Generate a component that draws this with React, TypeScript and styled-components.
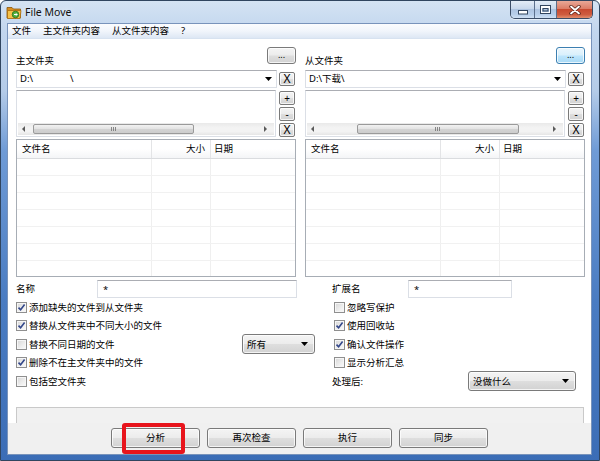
import React from "react";
import styled, { createGlobalStyle, css } from "styled-components";

const FONT = `"Noto Sans", "Noto Sans CJK SC", sans-serif`;

const Global = createGlobalStyle`
  html, body { margin: 0; padding: 0; background: #ffffff; }
  body { font-family: ${FONT}; font-size: 9.5px; color: #000; }
  * { box-sizing: border-box; }
`;

/* ---------- window chrome ---------- */

const Window = styled.div`
  position: relative;
  width: 600px;
  height: 461px;
  display: flex;
  flex-direction: column;
  border: 1px solid #30455f;
  border-radius: 6px 6px 0 0;
  overflow: hidden;
  background: linear-gradient(
    180deg,
    #d4e3f3 0px,
    #c2d6ee 30px,
    #b4cbe8 90px,
    #6f9bd6 150px,
    #4a7cc2 300px,
    #3b6db6 461px
  );
`;

const TitleBar = styled.div`
  height: 22px;
  flex: none;
  display: flex;
  align-items: center;
  padding-left: 5px;
  gap: 3px;
`;

const Title = styled.span`
  font-family: "Noto Sans", sans-serif;
  font-size: 10.5px;
  color: #111;
  text-shadow: 0 0 6px rgba(255, 255, 255, 0.9);
  line-height: 1;
`;

const Caption = styled.div`
  margin-left: auto;
  margin-right: 6px;
  align-self: flex-start;
  display: flex;
  height: 18px;
  border: 1px solid #3a4c66;
  border-top: none;
  border-radius: 0 0 5px 5px;
  overflow: hidden;
  box-shadow: 0 1px 0 rgba(255, 255, 255, 0.5);
`;

const CapBtn = styled.div<{ $w: number; $close?: boolean }>`
  width: ${(p) => p.$w}px;
  display: flex;
  align-items: center;
  justify-content: center;
  & + & {
    border-left: 1px solid #5b6f8c;
  }
  background: ${(p) =>
    p.$close
      ? "linear-gradient(180deg, #e9a897 0%, #dc7d67 45%, #c84a30 50%, #cf5c3f 80%, #e28e6d 100%)"
      : "linear-gradient(180deg, #e3ecf7 0%, #c8d8ec 45%, #aec4e1 50%, #b8cfea 80%, #cfe0f3 100%)"};
`;

const Client = styled.div`
  flex: 1;
  margin: 0 7px 5px 6px;
  border: 1px solid #7893bb;
  display: flex;
  flex-direction: column;
  background: #fff;
  min-height: 0;
`;

const MenuBar = styled.div`
  height: 15px;
  flex: none;
  display: flex;
  align-items: center;
  gap: 12px;
  padding-left: 4px;
  background: linear-gradient(180deg, #fbfcfe 0%, #f1f5fb 50%, #dde7f4 100%);
  border-bottom: 1px solid #d7e2f0;
`;

const MenuItem = styled.span`
  font-size: 9.5px;
  line-height: 1;
  color: #000;
`;

const Body = styled.div`
  flex: 1;
  min-height: 0;
  display: flex;
  flex-direction: column;
  padding: 8px 6px 0 8px;
  background: #fff;
`;

const ButtonBar = styled.div`
  height: 31px;
  flex: none;
  display: flex;
  justify-content: center;
  align-items: flex-start;
  gap: 7px;
  padding-top: 5px;
  background: #f0f0f0;
`;

const Highlight = styled.div`
  position: absolute;
  left: 121px;
  top: 422px;
  width: 63px;
  height: 31px;
  border: 4px solid #e8141c;
  border-radius: 3px;
  pointer-events: none;
`;

/* ---------- controls ---------- */

const buttonFace = css`
  border: 1px solid #7a7a7a;
  border-radius: 3px;
  background: linear-gradient(180deg, #f4f4f4 0%, #ececec 48%, #dedede 52%, #d2d2d2 100%);
  box-shadow: inset 0 0 0 1px rgba(255, 255, 255, 0.75);
  color: #000;
  font-family: ${FONT};
  display: flex;
  align-items: center;
  justify-content: center;
  padding: 0;
  line-height: 1;
`;

const PushButton = styled.div`
  ${buttonFace};
  width: 89px;
  height: 20px;
  font-size: 9.5px;
`;

const BrowseButton = styled.div<{ $active?: boolean }>`
  ${buttonFace};
  width: 29px;
  height: 17px;
  font-size: 9px;
  padding-bottom: 3px;
  ${(p) =>
    p.$active &&
    css`
      border-color: #3c7fb1;
      background: linear-gradient(180deg, #eaf6fd 0%, #d9f0fc 48%, #bee6fd 52%, #a7d9f5 100%);
    `}
`;

const SmallButton = styled.div<{ $fs?: number }>`
  ${buttonFace};
  width: 16px;
  height: 14px;
  border-radius: 2px;
  font-family: "Noto Sans", sans-serif;
  font-size: ${(p) => p.$fs ?? 12}px;
`;

const TextBox = styled.div<{ $w: number }>`
  width: ${(p) => p.$w}px;
  height: 18px;
  border: 1px solid #dbdfe6;
  border-top-color: #abadb3;
  background: #fff;
  display: flex;
  align-items: center;
  padding-left: 5px;
  font-family: "Noto Sans", sans-serif;
  font-size: 9.5px;
`;

const DropSelect = styled.div<{ $w: number }>`
  ${buttonFace};
  justify-content: space-between;
  width: ${(p) => p.$w}px;
  height: 20px;
  padding: 0 6px 0 4px;
  font-size: 9.5px;
  flex: none;
`;

const CheckRow = styled.div<{ $indent?: number }>`
  height: 18.5px;
  display: flex;
  align-items: center;
  gap: 2px;
  padding-left: ${(p) => p.$indent ?? 0}px;
`;

const Box = styled.span`
  width: 11px;
  height: 11px;
  flex: none;
  border: 1px solid #8f8f8f;
  background: linear-gradient(135deg, #d6d6d6 0%, #eeeeee 60%, #fbfbfb 100%);
  box-shadow: inset 0 0 0 1px #f6f6f6;
  display: flex;
  align-items: center;
  justify-content: center;
`;

const CheckText = styled.span`
  font-size: 9.5px;
  line-height: 1;
`;

/* ---------- folder panel ---------- */

const Panels = styled.div`
  display: flex;
  gap: 9px;
  flex: none;
`;

const Panel = styled.div`
  width: 280px;
  height: 230px;
  display: flex;
  flex-direction: column;
`;

const PanelHead = styled.div`
  height: 17px;
  display: flex;
  align-items: flex-end;
  justify-content: space-between;
`;

const PanelLabel = styled.span`
  font-size: 9.5px;
  line-height: 12px;
  margin-bottom: -3px;
`;

const ComboRow = styled.div`
  margin-top: 6px;
  height: 18px;
  display: flex;
  align-items: center;
  gap: 2px;
  padding-right: 1px;
`;

const Combo = styled.div`
  flex: 1;
  height: 18px;
  border: 1px solid #dbdfe6;
  border-top-color: #abadb3;
  display: flex;
  align-items: center;
  justify-content: space-between;
  padding: 0 4px 0 3px;
  font-size: 9.5px;
`;

const PathText = styled.span`
  line-height: 1;
  white-space: pre;
`;

const Masked = styled.span`
  display: inline-block;
  width: 37px;
`;

const ListRow = styled.div`
  margin-top: 2px;
  height: 47px;
  display: flex;
  gap: 3px;
  padding-right: 1px;
`;

const ListBox = styled.div`
  flex: 1;
  border: 1px solid #dbdfe6;
  border-top-color: #abadb3;
  display: flex;
  flex-direction: column;
  justify-content: flex-end;
  padding: 0 1px 1px 1px;
`;

const HScroll = styled.div`
  height: 12px;
  display: flex;
  align-items: center;
  background: linear-gradient(180deg, #e9e9e9 0%, #f3f3f3 40%, #f3f3f3 70%, #e6e6e6 100%);
  position: relative;
`;

const ScrollArrow = styled.span<{ $side: "left" | "right" }>`
  position: absolute;
  top: 3px;
  ${(p) => (p.$side === "left" ? "left: 4px;" : "right: 7px;")}
  display: flex;
`;

const Thumb = styled.div`
  position: absolute;
  top: 1px;
  height: 10px;
  border: 1px solid #9a9a9a;
  border-radius: 2px;
  background: linear-gradient(180deg, #f2f2f2 0%, #e4e4e4 45%, #d3d3d3 55%, #cdcdcd 100%);
  display: flex;
  align-items: center;
  justify-content: center;
`;

const Grip = styled.span`
  width: 6px;
  height: 4px;
  background: repeating-linear-gradient(90deg, #6f6f6f 0 1px, transparent 1px 2px);
  opacity: 0.8;
`;

const SideButtons = styled.div`
  width: 16px;
  display: flex;
  flex-direction: column;
  gap: 2px;
  padding-top: 1px;
`;

const ListView = styled.div`
  margin-top: 2px;
  flex: 1;
  min-height: 0;
  border: 1px solid #a7adb5;
  overflow: hidden;
  display: flex;
  flex-direction: column;
`;

const LVHead = styled.div`
  height: 19px;
  flex: none;
  display: flex;
  background: linear-gradient(180deg, #ffffff 0%, #ffffff 50%, #f4f5f7 100%);
  border-bottom: 1px solid #dadcdf;
`;

const HeadCell = styled.div<{ $w?: number; $right?: boolean; $pl?: number }>`
  ${(p) => (p.$w ? `width: ${p.$w}px; flex: none;` : "flex: 1;")}
  display: flex;
  align-items: center;
  justify-content: ${(p) => (p.$right ? "flex-end" : "flex-start")};
  padding: 0 ${(p) => (p.$right ? 5 : 0)}px 0 ${(p) => p.$pl ?? 0}px;
  border-right: 1px solid #e3e4e6;
  font-size: 9.5px;
  line-height: 1;
  &:last-child {
    border-right: none;
  }
`;

const LVRow = styled.div`
  height: 17px;
  flex: none;
  display: flex;
  border-bottom: 1px solid #f1f1f1;
`;

const LVCell = styled.div<{ $w?: number }>`
  ${(p) => (p.$w ? `width: ${p.$w}px; flex: none;` : "flex: 1;")}
  border-right: 1px solid #efefef;
  &:last-child {
    border-right: none;
  }
`;

/* ---------- options ---------- */

const Options = styled.div`
  margin-top: 3px;
  display: grid;
  grid-template-columns: 299px 1fr;
  column-gap: 17px;
`;

const OptCol = styled.div`
  display: flex;
  flex-direction: column;
`;

const FieldRow = styled.div`
  height: 18px;
  display: flex;
  align-items: center;
`;

const FieldLabel = styled.span<{ $w: number }>`
  width: ${(p) => p.$w}px;
  flex: none;
  font-size: 9.5px;
  line-height: 1;
`;

const SpreadRow = styled(CheckRow)`
  justify-content: space-between;
`;

const Group = styled.span`
  display: flex;
  align-items: center;
  gap: 2px;
`;

const StatusBox = styled.div`
  margin-top: auto;
  margin-right: 1px;
  height: 16px;
  border: 1px solid #c9c9c9;
  border-bottom: none;
  background: #f1f1f1;
`;

/* ---------- icons ---------- */

const AppIcon = () => (
  <svg width="16" height="16" viewBox="0 0 16 16">
    <path d="M1 3.5h5l1.5 1.5H14.5v9H1z" fill="#d98e1e" stroke="#8a5608" strokeWidth="0.8" />
    <path d="M1.5 6.5h13.5l-1 8H1.5z" fill="#f6c24a" stroke="#a86b0c" strokeWidth="0.8" />
    <circle cx="9.5" cy="10.5" r="3.3" fill="#4fae3a" stroke="#2b6e1f" strokeWidth="0.8" />
    <path d="M8 10.5h3M10 9.3l1.2 1.2L10 11.7" stroke="#fff" strokeWidth="1" fill="none" />
  </svg>
);

const MinIcon = () => (
  <svg width="10" height="5" viewBox="0 0 10 5" style={{ marginTop: 5 }}>
    <rect x="0.5" y="0.5" width="9" height="3.5" fill="#fff" stroke="#33465f" />
  </svg>
);

const MaxIcon = () => (
  <svg width="11" height="9" viewBox="0 0 11 9">
    <rect x="0.5" y="0.5" width="10" height="8" fill="none" stroke="#33465f" />
    <rect x="1.5" y="1.5" width="8" height="6" fill="none" stroke="#fff" />
    <rect x="2" y="2" width="7" height="1" fill="#fff" />
    <rect x="3" y="3.5" width="5" height="2.5" fill="none" stroke="#33465f" />
  </svg>
);

const CloseIcon = () => (
  <svg width="12" height="10" viewBox="0 0 12 10">
    <path d="M2 1.5l8 7M10 1.5l-8 7" stroke="#5a2418" strokeWidth="3.4" strokeLinecap="round" />
    <path d="M2 1.5l8 7M10 1.5l-8 7" stroke="#fff" strokeWidth="1.8" strokeLinecap="round" />
  </svg>
);

const DownArrow = () => (
  <svg width="7" height="4" viewBox="0 0 7 4">
    <path d="M0 0h7L3.5 4z" fill="#000" />
  </svg>
);

const Tri = ({ dir }: { dir: "left" | "right" }) => (
  <svg width="3" height="6" viewBox="0 0 3 6">
    <path d={dir === "left" ? "M3 0v6L0 3z" : "M0 0v6l3-3z"} fill="#5a5a5a" />
  </svg>
);

const Tick = () => (
  <svg width="9" height="9" viewBox="0 0 9 9">
    <path d="M1.5 4.6L3.6 6.8L7.6 1.6" fill="none" stroke="#33478a" strokeWidth="1.6" />
  </svg>
);

/* ---------- composite parts ---------- */

const Check = ({ label, checked, indent }: { label: string; checked?: boolean; indent?: number }) => (
  <CheckRow $indent={indent}>
    <Box>{checked && <Tick />}</Box>
    <CheckText>{label}</CheckText>
  </CheckRow>
);

const ROWS = [0, 1, 2, 3, 4, 5, 6];

type FolderProps = {
  label: string;
  path: React.ReactNode;
  active?: boolean;
  thumbLeft: number;
  thumbWidth: number;
};

const FolderPanel = ({ label, path, active, thumbLeft, thumbWidth }: FolderProps) => (
  <Panel>
    <PanelHead>
      <PanelLabel>{label}</PanelLabel>
      <BrowseButton $active={active}>...</BrowseButton>
    </PanelHead>
    <ComboRow>
      <Combo>
        <PathText>{path}</PathText>
        <DownArrow />
      </Combo>
      <SmallButton>X</SmallButton>
    </ComboRow>
    <ListRow>
      <ListBox>
        <HScroll>
          <ScrollArrow $side="left">
            <Tri dir="left" />
          </ScrollArrow>
          <Thumb style={{ left: thumbLeft, width: thumbWidth }}>
            <Grip />
          </Thumb>
          <ScrollArrow $side="right">
            <Tri dir="right" />
          </ScrollArrow>
        </HScroll>
      </ListBox>
      <SideButtons>
        <SmallButton $fs={10}>+</SmallButton>
        <SmallButton $fs={10}>-</SmallButton>
        <SmallButton>X</SmallButton>
      </SideButtons>
    </ListRow>
    <ListView>
      <LVHead>
        <HeadCell $w={135} $pl={5}>
          文件名
        </HeadCell>
        <HeadCell $w={59} $right>
          大小
        </HeadCell>
        <HeadCell $pl={3}>日期</HeadCell>
      </LVHead>
      {ROWS.map((r) => (
        <LVRow key={r}>
          <LVCell $w={135} />
          <LVCell $w={59} />
          <LVCell />
        </LVRow>
      ))}
    </ListView>
  </Panel>
);

export default function App() {
  return (
    <>
      <Global />
      <Window>
        <TitleBar>
          <AppIcon />
          <Title>File Move</Title>
          <Caption>
            <CapBtn $w={23}>
              <MinIcon />
            </CapBtn>
            <CapBtn $w={22}>
              <MaxIcon />
            </CapBtn>
            <CapBtn $w={36} $close>
              <CloseIcon />
            </CapBtn>
          </Caption>
        </TitleBar>
        <Client>
          <MenuBar>
            <MenuItem>文件</MenuItem>
            <MenuItem>主文件夹内容</MenuItem>
            <MenuItem>从文件夹内容</MenuItem>
            <MenuItem>?</MenuItem>
          </MenuBar>
          <Body>
            <Panels>
              <FolderPanel
                label="主文件夹"
                path={
                  <>
                    {"D:\\"}
                    <Masked />
                    {"\\"}
                  </>
                }
                thumbLeft={15}
                thumbWidth={161}
              />
              <FolderPanel label="从文件夹" path={"D:\\下载\\"} active thumbLeft={50} thumbWidth={162} />
            </Panels>
            <Options>
              <OptCol>
                <FieldRow>
                  <FieldLabel $w={81}>名称</FieldLabel>
                  <TextBox $w={200}>*</TextBox>
                </FieldRow>
                <Check label="添加缺失的文件到从文件夹" checked />
                <Check label="替换从文件夹中不同大小的文件" checked />
                <SpreadRow>
                  <Group>
                    <Box />
                    <CheckText>替换不同日期的文件</CheckText>
                  </Group>
                  <DropSelect $w={73}>
                    <span>所有</span>
                    <DownArrow />
                  </DropSelect>
                </SpreadRow>
                <Check label="删除不在主文件夹中的文件" checked />
                <Check label="包括空文件夹" />
              </OptCol>
              <OptCol>
                <FieldRow>
                  <FieldLabel $w={76}>扩展名</FieldLabel>
                  <TextBox $w={104}>*</TextBox>
                </FieldRow>
                <Check label="忽略写保护" indent={2} />
                <Check label="使用回收站" checked indent={2} />
                <Check label="确认文件操作" checked indent={2} />
                <Check label="显示分析汇总" indent={2} />
                <CheckRow>
                  <FieldLabel $w={134}>处理后:</FieldLabel>
                  <DropSelect $w={108}>
                    <span>没做什么</span>
                    <DownArrow />
                  </DropSelect>
                </CheckRow>
              </OptCol>
            </Options>
            <StatusBox />
          </Body>
          <ButtonBar>
            <PushButton>分析</PushButton>
            <PushButton>再次检查</PushButton>
            <PushButton>执行</PushButton>
            <PushButton>同步</PushButton>
          </ButtonBar>
        </Client>
        <Highlight />
      </Window>
    </>
  );
}
